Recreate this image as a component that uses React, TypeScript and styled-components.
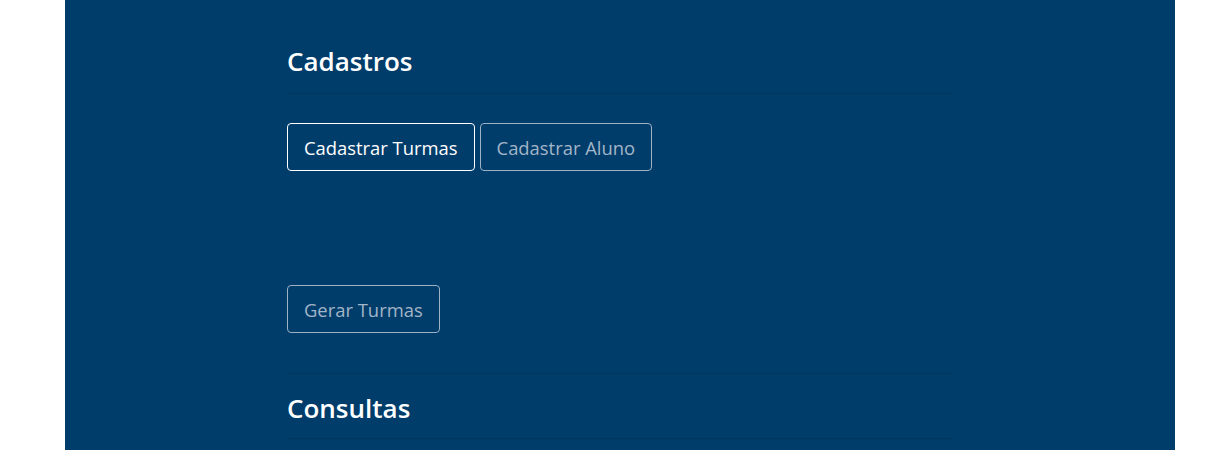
import React from "react";
import styled, { createGlobalStyle } from "styled-components";

const GlobalStyle = createGlobalStyle`
  html, body {
    margin: 0;
    padding: 0;
    background: #ffffff;
    font-family: "Open Sans", "Noto Sans", sans-serif;
  }
`;

const Panel = styled.div`
  width: 1110px;
  margin-left: 65px;
  min-height: 450px;
  background-color: #003d6b;
  display: flex;
  justify-content: center;
`;

const Content = styled.div`
  width: 666px;
  padding-top: 44px;
  display: flex;
  flex-direction: column;
`;

const SectionTitle = styled.h3`
  margin: 0;
  font-size: 26px;
  line-height: 34px;
  font-weight: 600;
  color: #ffffff;
`;

const Divider = styled.hr<{ $top: number; $bottom: number }>`
  width: 100%;
  margin: ${(p) => p.$top}px 0 ${(p) => p.$bottom}px;
  border: 0;
  border-top: 1px solid rgba(0, 0, 0, 0.12);
`;

const ButtonRow = styled.div`
  display: flex;
  gap: 5px;
`;

const OutlineButton = styled.button<{ $active?: boolean }>`
  height: 48px;
  padding: 0 16px;
  background: transparent;
  border: 1px solid ${(p) => (p.$active ? "#ffffff" : "#9fb1c4")};
  color: ${(p) => (p.$active ? "#ffffff" : "#a3b5c8")};
  border-radius: 4px;
  font-family: "Open Sans", "Noto Sans", sans-serif;
  font-size: 18.4px;
  cursor: pointer;
`;

const FormSpace = styled.div`
  height: 114px;
`;

const App: React.FC = () => {
  return (
    <>
      <GlobalStyle />
      <Panel>
        <Content>
          <SectionTitle>Cadastros</SectionTitle>
          <Divider $top={15} $bottom={29} />
          <ButtonRow>
            <OutlineButton $active>Cadastrar Turmas</OutlineButton>
            <OutlineButton>Cadastrar Aluno</OutlineButton>
          </ButtonRow>
          <FormSpace />
          <ButtonRow>
            <OutlineButton>Gerar Turmas</OutlineButton>
          </ButtonRow>
          <Divider $top={40} $bottom={17} />
          <SectionTitle>Consultas</SectionTitle>
          <Divider $top={13} $bottom={0} />
        </Content>
      </Panel>
    </>
  );
};

export default App;
